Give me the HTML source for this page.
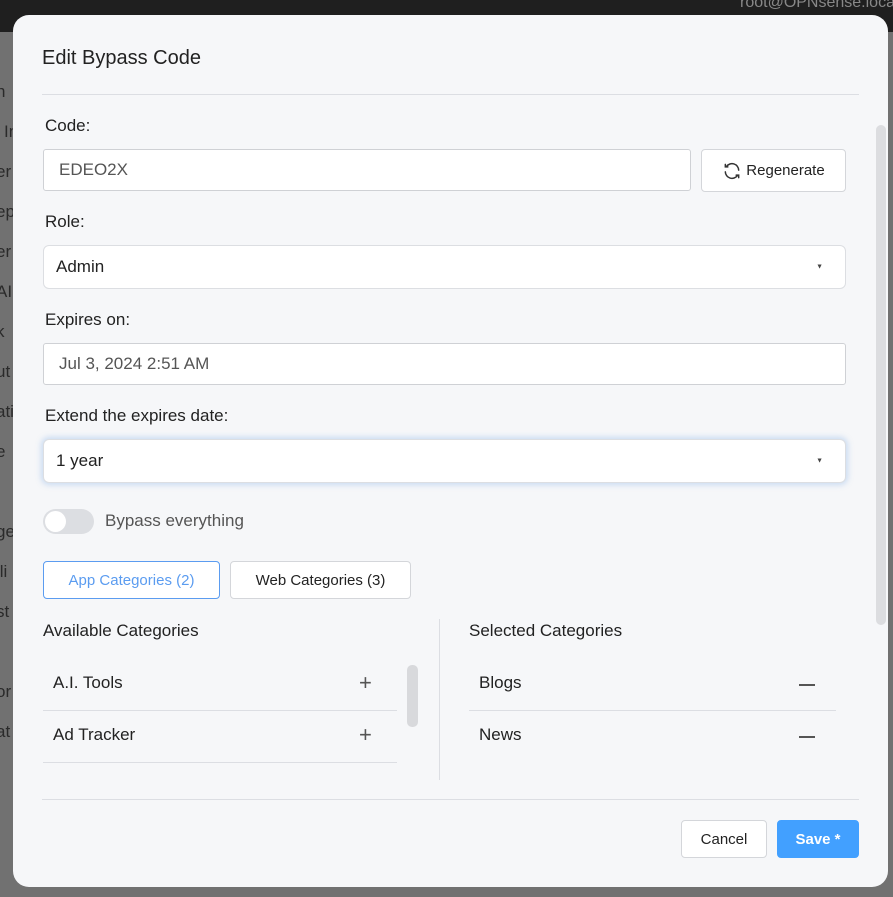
<!DOCTYPE html>
<html><head><style>
*{box-sizing:border-box;margin:0;padding:0}
body{width:893px;height:897px;background:#717171;position:relative;overflow:hidden;font-family:"Liberation Sans",sans-serif;color:#222}
.top{position:absolute;left:0;top:0;width:893px;height:32px;background:#1f1f1f}
.bg{position:absolute;color:#2a2a2a;font-size:17px}
.modal{position:absolute;left:13px;top:15px;width:875px;height:872px;background:#f6f7f9;border-radius:16px}
.a{position:absolute}
.lbl{position:absolute;font-size:17px;color:#222}
.inp{position:absolute;background:#fff;border:1px solid #cfd1d5;border-radius:3px;font-size:17px;color:#555;padding-left:15px;display:flex;align-items:center}
.sel{border-radius:6px;border-color:#dcdee2;color:#222;padding-left:12px}
.caret{position:absolute;right:22px;top:50%;font-size:7px;color:#444;transform:translateY(-50%)}
.hr{position:absolute;height:1px;background:#dcdee3}
.btn{position:absolute;background:#fff;border:1px solid #d4d6da;border-radius:4px;font-size:15px;display:flex;align-items:center;justify-content:center}
.row{position:absolute;font-size:17px;color:#222}
.pm{position:absolute;font-size:22px;color:#555;font-weight:300}
</style></head><body>
<div class="top"></div>
<div class="a" style="left:740px;top:-6px;color:#888;font-size:16px">root@OPNsense.loca</div>
<div class="bg" style="left:-4px;top:82px">n</div>
<div class="bg" style="left:4px;top:122px">In</div>
<div class="bg" style="left:-4px;top:162px">er</div>
<div class="bg" style="left:-4px;top:202px">ep</div>
<div class="bg" style="left:-4px;top:242px">er</div>
<div class="bg" style="left:-4px;top:282px">AI</div>
<div class="bg" style="left:-4px;top:322px">k</div>
<div class="bg" style="left:-4px;top:362px">ut</div>
<div class="bg" style="left:-4px;top:402px">ati</div>
<div class="bg" style="left:-4px;top:442px">e</div>
<div class="bg" style="left:-4px;top:522px">ge</div>
<div class="bg" style="left:-4px;top:562px">lli</div>
<div class="bg" style="left:-4px;top:602px">st</div>
<div class="bg" style="left:-4px;top:682px">or</div>
<div class="bg" style="left:-4px;top:722px">at</div>
<div class="modal"></div>
<div class="a" style="left:876px;top:125px;width:10px;height:500px;background:#dcdde0;border-radius:5px"></div>
<div class="lbl" style="left:42px;top:47px;font-size:20px">Edit Bypass Code</div>
<div class="hr" style="left:42px;top:94px;width:817px"></div>
<div class="lbl" style="left:45px;top:116px">Code:</div>
<div class="inp" style="left:43px;top:149px;width:648px;height:42px">EDEO2X</div>
<div class="btn" style="left:701px;top:149px;width:145px;height:43px;color:#222">
<svg width="20" height="20" viewBox="0 0 24 24" fill="none" stroke="#333" stroke-width="1.8" stroke-linecap="round" style="margin-right:4px"><path d="M20 11a8 8 0 0 0-14.5-4.5M4 4v3h3"/><path d="M4 13a8 8 0 0 0 14.5 4.5M20 20v-3h-3"/></svg>Regenerate</div>
<div class="lbl" style="left:45px;top:212px">Role:</div>
<div class="inp sel" style="left:43px;top:245px;width:803px;height:44px">Admin<span class="caret">▼</span></div>
<div class="lbl" style="left:45px;top:310px">Expires on:</div>
<div class="inp" style="left:43px;top:343px;width:803px;height:42px">Jul 3, 2024 2:51 AM</div>
<div class="lbl" style="left:45px;top:406px">Extend the expires date:</div>
<div class="inp sel" style="left:43px;top:439px;width:803px;height:44px;box-shadow:0 0 6px 2px rgba(120,170,230,.35)">1 year<span class="caret">▼</span></div>
<div class="a" style="left:43px;top:509px;width:51px;height:25px;background:#dcdee2;border-radius:13px"></div>
<div class="a" style="left:45px;top:511px;width:21px;height:21px;background:#fff;border-radius:50%"></div>
<div class="lbl" style="left:105px;top:511px;color:#555">Bypass everything</div>
<div class="btn" style="left:43px;top:561px;width:177px;height:38px;border-color:#5b9cf0;color:#5b9cf0">App Categories (2)</div>
<div class="btn" style="left:230px;top:561px;width:181px;height:38px;color:#222">Web Categories (3)</div>
<div class="lbl" style="left:43px;top:621px">Available Categories</div>
<div class="lbl" style="left:469px;top:621px">Selected Categories</div>
<div class="a" style="left:439px;top:619px;width:1px;height:161px;background:#dcdee3"></div>
<div class="a" style="left:407px;top:665px;width:11px;height:62px;background:#d8d9dc;border-radius:5px"></div>
<div class="row" style="left:53px;top:673px">A.I. Tools</div>
<div class="pm" style="left:359px;top:670px">+</div>
<div class="hr" style="left:43px;top:710px;width:354px"></div>
<div class="row" style="left:53px;top:725px">Ad Tracker</div>
<div class="pm" style="left:359px;top:722px">+</div>
<div class="hr" style="left:43px;top:762px;width:354px"></div>
<div class="row" style="left:479px;top:673px">Blogs</div>
<div class="a" style="left:799px;top:684px;width:16px;height:2px;background:#555"></div>
<div class="hr" style="left:469px;top:710px;width:367px"></div>
<div class="row" style="left:479px;top:725px">News</div>
<div class="a" style="left:799px;top:736px;width:16px;height:2px;background:#555"></div>
<div class="hr" style="left:42px;top:799px;width:817px"></div>
<div class="btn" style="left:681px;top:820px;width:86px;height:38px;color:#222">Cancel</div>
<div class="btn" style="left:777px;top:820px;width:82px;height:38px;background:#42a0ff;border-color:#42a0ff;color:#fff;font-weight:bold">Save *</div>
</body></html>
